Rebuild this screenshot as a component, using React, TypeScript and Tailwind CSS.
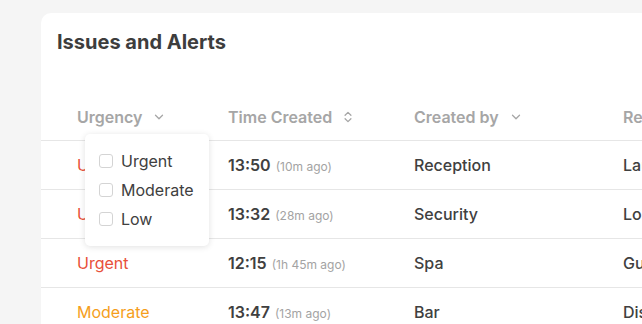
import { ChevronDown, ChevronsUpDown } from 'lucide-react';

const rows = [
  { urgency: 'Urgent', time: '13:50', ago: '(10m ago)', by: 'Reception', re: 'Laundry' },
  { urgency: 'Urgent', time: '13:32', ago: '(28m ago)', by: 'Security', re: 'Lobby' },
  { urgency: 'Urgent', time: '12:15', ago: '(1h 45m ago)', by: 'Spa', re: 'Guest' },
  { urgency: 'Moderate', time: '13:47', ago: '(13m ago)', by: 'Bar', re: 'Dispute' },
];

export default function App() {
  return (
    <div
      className="h-[324px] w-[642px] overflow-hidden bg-[#f5f5f5] pl-[41px] pt-[13px]"
      style={{ fontFamily: 'Inter, "Noto Sans", sans-serif' }}
    >
      <div className="relative w-[680px] rounded-tl-[10px] bg-white pt-[15px]">
        <h2 className="pl-4 text-[20px] font-bold leading-7 text-[#3d3d3d]">Issues and Alerts</h2>

        {/* header */}
        <div className="mt-[49px] grid grid-cols-[187px_186px_209px_1fr] border-b border-[#e6e6e6] pb-[11px] text-[16px] font-semibold leading-6 text-[#a6a6a6]">
          <div className="flex items-center pl-9">
            Urgency
            <ChevronDown className="ml-[10px] h-[14px] w-[14px]" strokeWidth={2.2} />
          </div>
          <div className="flex items-center">
            Time Created
            <ChevronsUpDown className="ml-[9px] h-[14px] w-[14px]" strokeWidth={2.2} />
          </div>
          <div className="flex items-center">
            Created by
            <ChevronDown className="ml-[10px] h-[14px] w-[14px]" strokeWidth={2.2} />
          </div>
          <div>Reason</div>
        </div>

        {rows.map((r, i) => (
          <div
            key={i}
            className="grid h-[49px] grid-cols-[187px_186px_209px_1fr] items-center border-b border-[#e6e6e6] text-[16px] font-medium text-[#404040]"
          >
            <div className={`pl-9 font-normal ${r.urgency === 'Urgent' ? 'text-[#e8503a]' : 'text-[#f59e1b]'}`}>
              {r.urgency}
            </div>
            <div className="whitespace-nowrap">
              <span className="font-semibold">{r.time}</span>
              <span className="ml-[5px] text-[12px] font-normal text-[#a3a3a3]">{r.ago}</span>
            </div>
            <div>{r.by}</div>
            <div>{r.re}</div>
          </div>
        ))}

        {/* urgency filter dropdown */}
        <div className="absolute left-[44px] top-[121px] w-[124px] rounded-[5px] bg-white pb-[13px] pt-[12px] shadow-[0_1px_6px_rgba(0,0,0,0.12)]">
          {['Urgent', 'Moderate', 'Low'].map((o) => (
            <label key={o} className="flex h-[29px] items-center pl-[14px] text-[16px] text-[#404040]">
              <span className="mr-[8px] h-[14px] w-[14px] rounded-[3px] border border-[#d4d4d4] bg-white" />
              {o}
            </label>
          ))}
        </div>
      </div>
    </div>
  );
}
